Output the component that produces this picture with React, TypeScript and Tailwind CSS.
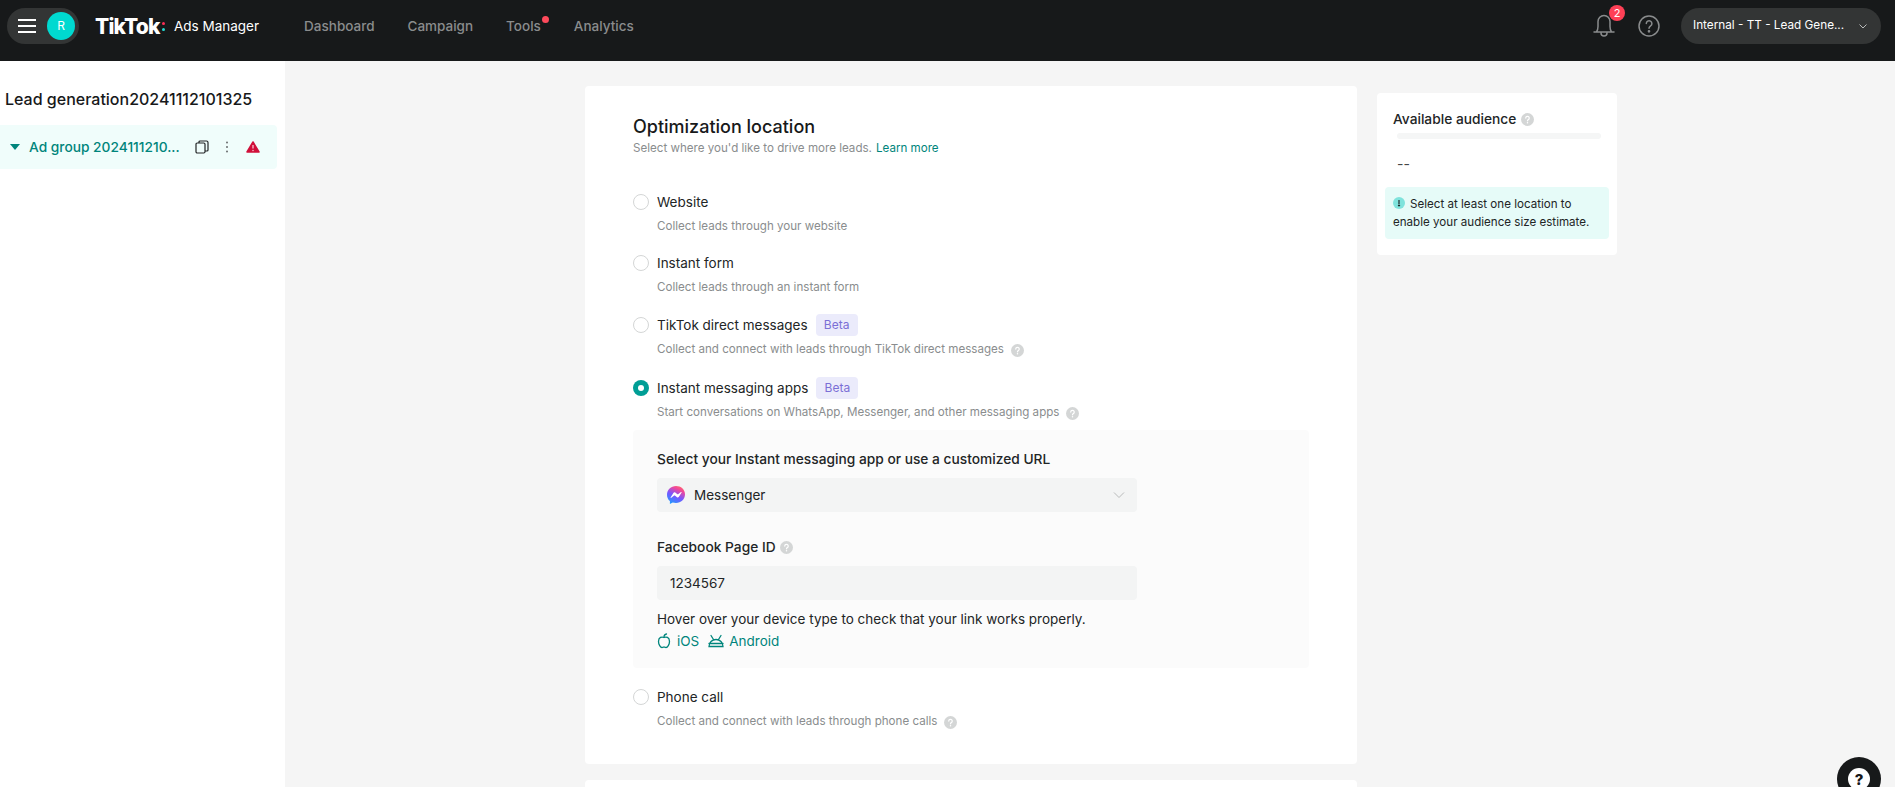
import React from "react";

const FONT = "font-['Inter','Noto_Sans',sans-serif]";

function Help({ className = "" }: { className?: string }) {
  return (
    <svg viewBox="0 0 12 12" className={`h-[13px] w-[13px] shrink-0 ${className}`}>
      <circle cx="6" cy="6" r="6" fill="#d4d6d6" />
      <path d="M4.4 4.7a1.6 1.6 0 1 1 2.5 1.3c-.6.4-.9.6-.9 1.2" fill="none" stroke="#fff" strokeWidth="1.1" strokeLinecap="round" />
      <circle cx="6" cy="9" r=".7" fill="#fff" />
    </svg>
  );
}

function Radio({ checked = false }: { checked?: boolean }) {
  return checked ? (
    <span className="flex h-4 w-4 shrink-0 items-center justify-center rounded-full bg-[#009e95]">
      <span className="h-1.5 w-1.5 rounded-full bg-white" />
    </span>
  ) : (
    <span className="h-4 w-4 shrink-0 rounded-full border border-[#d4d6d6] bg-white" />
  );
}

function Beta() {
  return (
    <span className="flex h-[22px] w-[42px] items-center justify-center rounded bg-[#ebebfb] text-xs text-[#7b6fd6]">Beta</span>
  );
}

function Option({
  label,
  sub,
  beta,
  help,
  checked,
  className = "",
}: {
  label: string;
  sub: string;
  beta?: boolean;
  help?: boolean;
  checked?: boolean;
  className?: string;
}) {
  return (
    <div className={className}>
      <div className="flex h-[22px] items-center gap-2">
        <Radio checked={checked} />
        <span className="text-[13.5px] text-[#222526]">{label}</span>
        {beta && <Beta />}
      </div>
      <div className="mt-[6px] flex h-4 items-center pl-6 text-[11.6px] text-[#8a8d8e]">
        <span>{sub}</span>
        {help && <Help className="ml-[7px]" />}
      </div>
    </div>
  );
}

function Messenger() {
  return (
    <svg viewBox="0 0 18 18" className="h-[18px] w-[18px] shrink-0">
      <defs>
        <linearGradient id="msg" x1="0.25" y1="1" x2="0.75" y2="0">
          <stop offset="0" stopColor="#1e9bff" />
          <stop offset="0.45" stopColor="#7a55ff" />
          <stop offset="0.8" stopColor="#f0469a" />
          <stop offset="1" stopColor="#ff6a6a" />
        </linearGradient>
      </defs>
      <path d="M9 0C4 0 0 3.7 0 8.7c0 2.6 1.1 4.9 2.9 6.4v2.9l2.8-1.5c1 .3 2.1.5 3.3.5 5 0 9-3.7 9-8.7S14 0 9 0Z" fill="url(#msg)" />
      <path d="m3.7 11.2 2.7-4.2c.4-.7 1.3-.8 1.9-.4l2.1 1.6c.2.2.5.2.7 0l2.9-2.2c.4-.3.9.2.6.6l-2.7 4.2c-.4.7-1.3.8-1.9.4L7.9 9.6c-.2-.2-.5-.2-.7 0l-2.9 2.2c-.4.3-.9-.2-.6-.6Z" fill="#fff" />
    </svg>
  );
}

function Header() {
  return (
    <header className="flex h-[61px] shrink-0 items-center bg-[#17191a] pb-[9px] text-[13.5px]">
      <div className="ml-[7px] flex h-9 w-[72px] items-center justify-between rounded-full bg-[#333535] pl-[11px] pr-1">
        <svg viewBox="0 0 18 14" className="h-3.5 w-[18px]">
          <path d="M0 1h18M0 7h18M0 13h18" stroke="#fff" strokeWidth="1.8" />
        </svg>
        <span className="flex h-7 w-7 items-center justify-center rounded-full bg-[#00d9d0] text-xs text-white">R</span>
      </div>
      <div className="ml-4 flex w-[74px] items-center">
        <span className="text-[21px] font-extrabold leading-none tracking-[-0.8px] text-white">TikTok</span>
        <span className="ml-[2px] flex flex-col gap-[3px]">
          <span className="h-[3px] w-[3px] rounded-full bg-[#ff2d55]" />
          <span className="h-[3px] w-[3px] rounded-full bg-[#25d9d0]" />
        </span>
      </div>
      <span className="ml-[5px] text-[13.5px] text-white">Ads Manager</span>
      <nav className="ml-[45px] flex items-center font-medium text-[#8a8c8d]">
        <span>Dashboard</span>
        <span className="ml-[33px]">Campaign</span>
        <span className="relative ml-[33px]">
          Tools
          <span className="absolute -right-2 top-0 h-[7px] w-[7px] rounded-full bg-[#fe4a5b]" />
        </span>
        <span className="ml-[33px]">Analytics</span>
      </nav>
      <div className="ml-auto flex items-center">
        <span className="relative mr-[21px] flex h-6 w-6 items-center justify-center">
          <svg viewBox="0 0 24 24" className="h-6 w-6" fill="none" stroke="#8a8c8d" strokeWidth="1.5" strokeLinecap="round">
            <path d="M2 18h20M4.500 18c1-1.500 1.500-3 1.500-5.500V7.500a6 6 0 0 1 12 0v5c0 2.500.5 4 1.500 5.500M9 19a3 3 0 0 0 6 0" />
          </svg>
          <span className="absolute -right-[9px] -top-[9px] flex h-4 w-4 items-center justify-center rounded-full bg-[#fe4056] text-[11px] leading-none text-white">2</span>
        </span>
        <svg viewBox="0 0 24 24" className="mr-[20px] h-6 w-6" fill="none" stroke="#8a8c8d" strokeWidth="1.5" strokeLinecap="round">
          <circle cx="12" cy="12" r="10" />
          <path d="M9.300 9.500a2.800 2.800 0 1 1 4.300 2.400c-1 .7-1.600 1.200-1.600 2.400" />
          <circle cx="12" cy="17.300" r=".6" fill="#8a8c8d" />
        </svg>
        <div className="mr-[14px] flex h-9 w-[200px] items-center rounded-full bg-[#333535] pl-3 pr-[12px] text-white">
          <span className="whitespace-nowrap text-[11.75px]">Internal - TT - Lead Gene...</span>
          <svg viewBox="0 0 12 12" className="ml-auto h-3 w-3 shrink-0" fill="none" stroke="#b9bbbb" strokeWidth="1">
            <path d="m2.500 4.500 3.500 3.500 3.500-3.500" />
          </svg>
        </div>
      </div>
    </header>
  );
}

function Sidebar() {
  return (
    <aside className="w-[285px] shrink-0 bg-white">
      <h1 className="ml-[5px] mt-[27px] h-[22px] text-base font-medium leading-[22px] text-[#17191a]">Lead generation20241112101325</h1>
      <div className="mt-[15px] flex h-[44px] w-[277px] items-center rounded-r bg-[#f0fdfb] pl-[10px]">
        <svg viewBox="0 0 10 6" className="h-1.5 w-2.5 shrink-0">
          <path d="M0 0h10L5 6Z" fill="#00857c" />
        </svg>
        <span className="ml-[9px] w-[152px] shrink-0 whitespace-nowrap text-[13.75px] font-medium text-[#00857c]">Ad group 2024111210...</span>
        <svg viewBox="0 0 14 14" className="ml-[14px] h-3.5 w-3.5 shrink-0" fill="none" stroke="#222526" strokeWidth="1.2">
          <rect x="1" y="3" width="9" height="10" rx="1.2" />
          <path d="M4 3V2a1 1 0 0 1 1-1h6.500A1.500 1.500 0 0 1 13 2.500V10a1 1 0 0 1-1 1h-2" />
        </svg>
        <svg viewBox="0 0 4 14" className="ml-[16px] h-3.5 w-1 shrink-0" fill="#6b6e6f">
          <circle cx="2" cy="2.500" r="1" />
          <circle cx="2" cy="7" r="1" />
          <circle cx="2" cy="11.500" r="1" />
        </svg>
        <svg viewBox="0 0 14 12" className="ml-[17px] h-3 w-3.5 shrink-0">
          <path d="M7 1 13 11H1Z" fill="#d0103a" stroke="#d0103a" strokeWidth="1.500" strokeLinejoin="round" />
          <path d="M7 4v3.500" stroke="#f7b8c6" strokeWidth="1.400" />
          <circle cx="7" cy="9.500" r=".8" fill="#f7b8c6" />
        </svg>
      </div>
    </aside>
  );
}

function Card() {
  return (
    <section className="w-[772px] shrink-0">
      <div className="h-[678px] rounded bg-white pl-12 pr-[48px] pt-[29px]">
        <h2 className="h-6 text-lg font-medium leading-6 text-[#17191a]">Optimization location</h2>
        <p className="mt-[2px] flex h-4 items-center text-[11.6px] text-[#8a8d8e]">
          <span>Select where you'd like to drive more leads.</span>
          <span className="ml-[4px] text-[#00857c]">Learn more</span>
        </p>
        <div className="mt-[34px] flex flex-col">
          <Option label="Website" sub="Collect leads through your website" />
          <Option className="mt-[17px]" label="Instant form" sub="Collect leads through an instant form" />
          <Option className="mt-[18px]" label="TikTok direct messages" sub="Collect and connect with leads through TikTok direct messages" beta help />
          <Option className="mt-[19px]" label="Instant messaging apps" sub="Start conversations on WhatsApp, Messenger, and other messaging apps" beta help checked />
        </div>
        <div className="mt-[9px] h-[238px] rounded bg-[#fbfbfb] pl-6 pt-[19px]">
          <div className="h-5 text-[13.75px] font-medium leading-5 text-[#222526]">Select your Instant messaging app or use a customized URL</div>
          <div className="mt-[9px] flex h-[34px] w-[480px] items-center rounded bg-[#f3f4f4] pl-[10px] pr-3">
            <Messenger />
            <span className="ml-[9px] text-[13.5px] text-[#222526]">Messenger</span>
            <svg viewBox="0 0 12 12" className="ml-auto h-3 w-3" fill="none" stroke="#b9bbbb" strokeWidth="1">
              <path d="m1 3.500 5 5 5-5" />
            </svg>
          </div>
          <div className="mt-[25px] flex h-5 items-center text-[13.75px] font-medium text-[#222526]">
            Facebook Page ID
            <Help className="ml-[4px]" />
          </div>
          <div className="mt-[9px] flex h-[34px] w-[480px] items-center rounded bg-[#f3f4f4] pl-[13px] text-[13.5px] text-[#222526]">1234567</div>
          <div className="mt-[9px] h-5 text-[13.5px] leading-5 text-[#222526]">Hover over your device type to check that your link works properly.</div>
          <div className="mt-[2px] flex h-5 items-center text-[13.5px] text-[#00857c]">
            <svg viewBox="0 0 14 16" className="h-4 w-3.5" fill="none" stroke="#00857c" strokeWidth="1.300" strokeLinecap="round" strokeLinejoin="round">
              <path d="M7 4.500C5 3.500 1.500 4 1.500 8.500 1.500 11.500 3.500 14.500 5 14.500 6 14.500 6.200 14 7 14 7.800 14 8 14.500 9 14.500 10.500 14.500 12.500 11.500 12.500 8.500 12.500 4 9 3.500 7 4.500Z" />
              <path d="M7 4C7 2.500 8 1.300 9.500 1" />
            </svg>
            <span className="ml-[6px]">iOS</span>
            <svg viewBox="0 0 16 14" className="ml-[9px] h-3.5 w-4" fill="none" stroke="#00857c" strokeWidth="1.300" strokeLinecap="round">
              <path d="M1 12.500c0-4 3-7 7-7s7 3 7 7ZM3 1.500l2.500 4M13 1.500l-2.500 4M1 9.500h14" />
            </svg>
            <span className="ml-[5px]">Android</span>
          </div>
        </div>
        <div className="mt-[18px]">
          <Option label="Phone call" sub="Collect and connect with leads through phone calls" help />
        </div>
      </div>
      <div className="mt-4 h-10 rounded-t bg-white" />
    </section>
  );
}

function Audience() {
  return (
    <aside className="ml-5 mt-[7px] h-[162px] w-[240px] shrink-0 rounded bg-white px-2 pt-4">
      <div className="flex h-5 items-center pl-2 text-[13.75px] font-medium text-[#222526]">
        Available audience
        <Help className="ml-[5px]" />
      </div>
      <div className="ml-3 mt-1 h-1.5 w-[204px] rounded-full bg-[#f5f6f6]" />
      <div className="ml-3 mt-[16px] h-[18px] text-sm leading-[18px] text-[#444748]">--</div>
      <div className="mt-[14px] h-[52px] rounded bg-[#e6fbf8] px-2 py-2 text-[11.6px] leading-[18px] text-[#222526]">
        <svg viewBox="0 0 12 12" className="mr-[5px] inline h-3 w-3 align-[-1px]">
          <circle cx="6" cy="6" r="6" fill="#7fe3dc" />
          <path d="M6 3v4.500" stroke="#17191a" strokeWidth="1.100" />
          <path d="M4.600 8h2.800L6 9.800Z" fill="#17191a" />
        </svg>
        Select at least one location to enable your audience size estimate.
      </div>
    </aside>
  );
}

export default function App() {
  return (
    <div className={`relative flex h-[787px] flex-col overflow-hidden bg-[#f5f5f5] ${FONT}`}>
      <Header />
      <div className="flex min-h-0 flex-1">
        <Sidebar />
        <main className="flex flex-1 pl-[300px] pt-[25px]">
          <Card />
          <Audience />
        </main>
      </div>
      <div className="absolute left-[1837px] top-[757px] flex h-11 w-11 items-center justify-center rounded-full bg-[#17191a]">
        <span className="flex h-[22px] w-[22px] items-center justify-center rounded-full bg-white text-[15px] font-extrabold leading-none text-[#17191a]">?</span>
      </div>
    </div>
  );
}
